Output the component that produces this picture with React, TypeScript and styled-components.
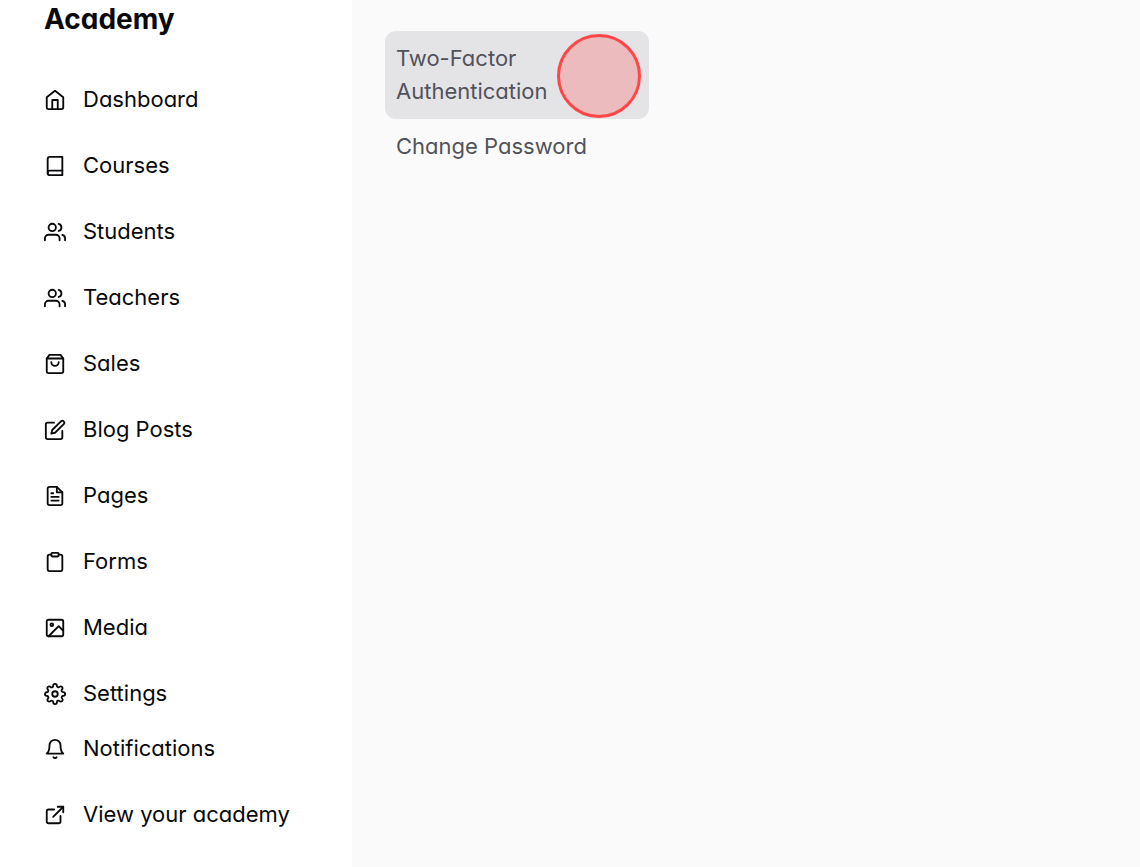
import React from "react";
import styled, { createGlobalStyle } from "styled-components";
import {
  FiBell,
  FiBook,
  FiClipboard,
  FiEdit,
  FiExternalLink,
  FiFileText,
  FiHome,
  FiImage,
  FiSettings,
  FiShoppingBag,
  FiUsers,
} from "react-icons/fi";

const GlobalStyle = createGlobalStyle`
  *, *::before, *::after { box-sizing: border-box; }
  body {
    margin: 0;
    background: #fafafa;
    color: #09090b;
    font-family: Inter, "Liberation Sans", sans-serif;
    font-feature-settings: "cv11";
    font-size: 22px;
    line-height: 33px;
  }
  ul { list-style: none; margin: 0; padding: 0; }
  a { color: inherit; text-decoration: none; }
`;

const Page = styled.div`
  display: flex;
  align-items: stretch;
  min-height: 100vh;
`;

const Sidebar = styled.aside`
  flex: 0 0 352px;
  background: #ffffff;
`;

const Brand = styled.h1`
  margin: 0 0 36px;
  padding: 3px 44px 0;
  font-size: 28px;
  line-height: 33px;
  font-weight: 700;
`;

const NavList = styled.ul`
  display: flex;
  flex-direction: column;
  padding: 0 33px;
`;

const NavItem = styled.li<{ $tight?: boolean }>`
  margin-bottom: ${({ $tight }) => ($tight ? 0 : 11)}px;
`;

const NavLink = styled.a`
  display: flex;
  align-items: center;
  gap: 17px;
  padding: 11px;
  svg { flex: none; }
`;

const Content = styled.main`
  flex: 1;
  padding: 31px 33px;
`;

const SubNav = styled.ul`
  width: 264px;
`;

const SubLink = styled.a<{ $active?: boolean }>`
  position: relative;
  display: block;
  padding: 11px;
  border-radius: 11px;
  color: #52525b;
  background: ${({ $active }) => ($active ? "#e4e4e7" : "transparent")};
`;

const ClickMarker = styled.span`
  position: absolute;
  top: 3px;
  right: 8px;
  width: 84px;
  height: 84px;
  border: 3px solid #ff4747;
  border-radius: 50%;
  background: rgba(255, 71, 71, 0.26);
`;

const items = [
  { label: "Dashboard", Icon: FiHome },
  { label: "Courses", Icon: FiBook },
  { label: "Students", Icon: FiUsers },
  { label: "Teachers", Icon: FiUsers },
  { label: "Sales", Icon: FiShoppingBag },
  { label: "Blog Posts", Icon: FiEdit },
  { label: "Pages", Icon: FiFileText },
  { label: "Forms", Icon: FiClipboard },
  { label: "Media", Icon: FiImage },
  { label: "Settings", Icon: FiSettings, tight: true },
  { label: "Notifications", Icon: FiBell },
  { label: "View your academy", Icon: FiExternalLink },
];

export default function App() {
  return (
    <>
      <GlobalStyle />
      <Page>
        <Sidebar>
          <Brand>Academy</Brand>
          <nav aria-label="Main">
            <NavList>
              {items.map(({ label, Icon, tight }) => (
                <NavItem key={label} $tight={tight}>
                  <NavLink href="#">
                    <Icon size={22} aria-hidden="true" />
                    {label}
                  </NavLink>
                </NavItem>
              ))}
            </NavList>
          </nav>
        </Sidebar>
        <Content>
          <nav aria-label="Security">
            <SubNav>
              <li>
                <SubLink href="#" $active>
                  Two-Factor Authentication
                  <ClickMarker />
                </SubLink>
              </li>
              <li>
                <SubLink href="#">Change Password</SubLink>
              </li>
            </SubNav>
          </nav>
        </Content>
      </Page>
    </>
  );
}
